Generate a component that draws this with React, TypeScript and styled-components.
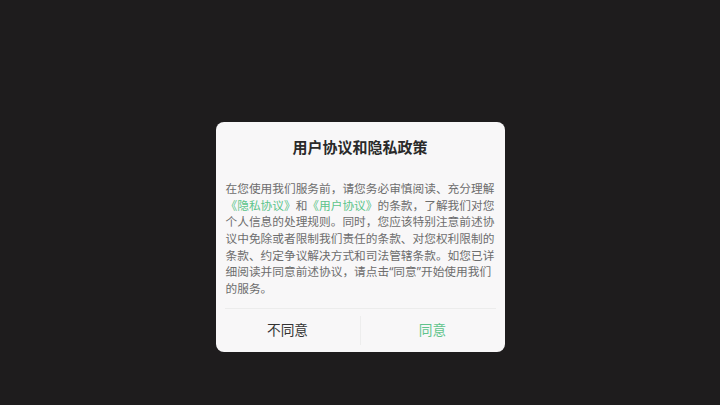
import React from 'react'
import styled, {createGlobalStyle} from 'styled-components'

const GlobalStyle = createGlobalStyle`
  html, body {
    margin: 0;
    padding: 0;
    background: #1e1c1d;
  }
  body {
    font-family: "Noto Sans CJK SC", "Noto Sans", sans-serif;
  }
`

const Page = styled.div`
  width: 720px;
  height: 405px;
  box-sizing: border-box;
  padding-top: 122px;
  display: flex;
  justify-content: center;
  align-items: flex-start;
  background: #1e1c1d;
`

const Dialog = styled.div`
  width: 289px;
  height: 230px;
  background: #f8f7f8;
  border-radius: 8px;
  display: flex;
  flex-direction: column;
  overflow: hidden;
`

const Title = styled.h2`
  margin: 0;
  padding-top: 15px;
  height: 20px;
  line-height: 20px;
  font-size: 15px;
  font-weight: 700;
  color: #2a2a2a;
  text-align: center;
`

const Body = styled.p`
  margin: 23px 0 0;
  padding: 0 10px;
  font-size: 11.7px;
  line-height: 16.67px;
  color: #6d6d6d;
  white-space: nowrap;
`

const Link = styled.span`
  color: #5cc48a;
`

// narrow latin quote marks, as in the original
const Quote = styled.span`
  font-family: "Noto Sans", "Liberation Sans", sans-serif;
`

const Divider = styled.div`
  margin: 11px 9px 0;
  height: 1px;
  background: #ececec;
`

const Actions = styled.div`
  flex: 1;
  display: flex;
  align-items: stretch;
`

const Action = styled.button<{$primary?: boolean}>`
  flex: 1;
  border: none;
  background: transparent;
  padding: 0 0 2px;
  font-family: inherit;
  font-size: 13.7px;
  color: ${({$primary}) => ($primary ? '#5fc48c' : '#333333')};
  cursor: pointer;
`

const ActionSplit = styled.div`
  width: 1px;
  margin: 7px 0;
  background: #ededed;
`

const lines: React.ReactNode[] = [
  '在您使用我们服务前，请您务必审慎阅读、充分理解',
  <>
    <Link>《隐私协议》</Link>和<Link>《用户协议》</Link>的条款，了解我们对您
  </>,
  '个人信息的处理规则。同时，您应该特别注意前述协',
  '议中免除或者限制我们责任的条款、对您权利限制的',
  '条款、约定争议解决方式和司法管辖条款。如您已详',
  <>
    细阅读并同意前述协议，请点击<Quote>“</Quote>同意<Quote>”</Quote>开始使用我们
  </>,
  '的服务。',
]

export default function App() {
  return (
    <>
      <GlobalStyle />
      <Page>
        <Dialog>
          <Title>用户协议和隐私政策</Title>
          <Body>
            {lines.map((line, i) => (
              <React.Fragment key={i}>
                {line}
                {i < lines.length - 1 && <br />}
              </React.Fragment>
            ))}
          </Body>
          <Divider />
          <Actions>
            <Action>不同意</Action>
            <ActionSplit />
            <Action $primary>同意</Action>
          </Actions>
        </Dialog>
      </Page>
    </>
  )
}
